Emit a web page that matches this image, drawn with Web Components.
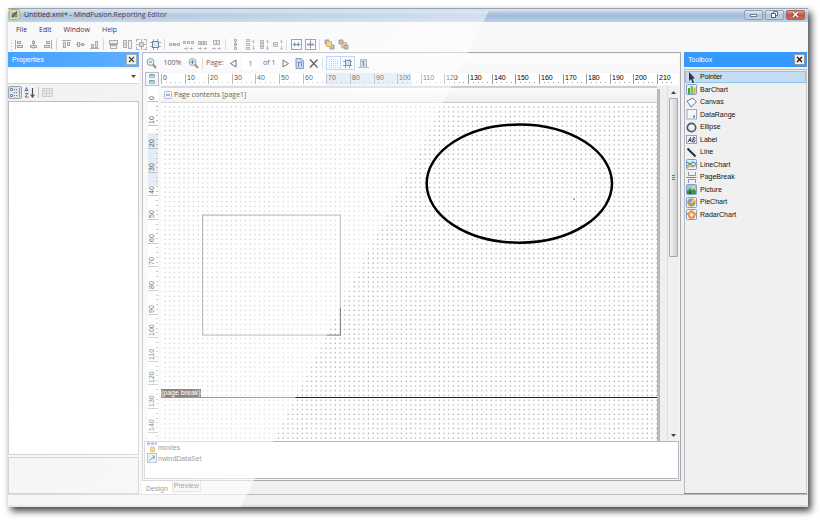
<!DOCTYPE html>
<html lang="en">
<head>
<meta charset="utf-8">
<title>MindFusion.Reporting Editor</title>
<style>
  html { background: #fff; }
  body { margin: 0; padding: 8px 12px 13px 8px; box-sizing: border-box; min-height: 100vh; display: flex;
    font: 7px/10px "Liberation Sans", Arial, sans-serif; color: #111;
    --ui: "Open Sans", "Noto Sans", sans-serif; }
</style>
</head>
<body>
<app-window></app-window>
<script>
const svg = (body, w = 11, h = 11) => `<svg viewBox="0 0 ${w} ${h}" width="${w}" height="${h}" fill="none">${body}</svg>`;
const G = '#9c9c9f';
const box = (x, y, w, h, f = '#ddd') => `<rect x="${x + .5}" y="${y + .5}" width="${w - 1}" height="${h - 1}" fill="${f}" stroke="${G}"/>`;
const ln = (d, c = G, w = 1) => `<path d="${d}" stroke="${c}" stroke-width="${w}"/>`;
const arrowsH = ln('M1 9.500h3M6.500 9.500h3') + `<path d="M3 8l2 1.500-2 1.500zM8 8l2 1.500-2 1.500z" fill="${G}"/>`;
const arrowsV = ln('M9.500 1v3.500M9.500 6.500v4') + `<path d="M8 3l1.500-2 1.500 2zM8 9l1.500 2 1.500-2z" fill="${G}"/>`;
const lens = s => `<circle cx="4.500" cy="4" r="3.500" fill="#d8e8f4" stroke="#6f8796"/><path d="M7 6.500l3 3.500" stroke="#8d6b48" stroke-width="2"/>` + ln(s, '#34618c');
const frame = (f = '#e4f0fb') => `<rect x=".5" y=".5" width="10" height="10" rx="1" fill="${f}" stroke="#7f9fc9"/>`;
const ICONS = {
  alignLeft: ln('M1.500 1v9') + box(3, 2, 4, 3) + box(3, 6, 6, 3),
  alignCenter: ln('M5.500 1v9') + box(4, 2, 3, 3) + box(2, 6, 7, 3),
  alignRight: ln('M9.500 1v9') + box(4, 2, 4, 3) + box(2, 6, 6, 3),
  alignTop: ln('M1 1.500h9') + box(2, 3, 3, 6) + box(6, 3, 3, 4),
  alignMiddle: ln('M1 5.500h9') + box(2, 3, 3, 5) + box(6, 4, 3, 3),
  alignBottom: ln('M1 9.500h9') + box(2, 5, 3, 4) + box(6, 2, 3, 7),
  sameWidth: box(1, 1, 9, 4, '#eee') + box(2, 6, 7, 4, '#eee') + ln('M1 5.500h9'),
  sameHeight: box(1, 1, 4, 8, '#eee') + box(6, 1, 4, 9, '#eee') + ln('M3 3v4'),
  sameSize: box(3, 3, 5, 5, '#ccc') + `<path d="M.5 3V.5h3M7.500 .5h3v3M10.500 7.500v3h-3M3.500 10.500h-3v-3" stroke="${G}"/>` + ln('M5.500 0v3M5.500 8v3M0 5.500h3M8 5.500h3'),
  sizeGrid: `<path d="M3.500 0v11M7.500 0v11M0 3.500h11M0 7.500h11" stroke="#8a97a8"/><rect x="2.500" y="2.500" width="6" height="6" fill="#d6e2ee" stroke="#4f6478"/>`,
  hEqual: box(0, 4, 3, 3) + box(4, 4, 3, 3) + box(8, 4, 3, 3) + ln('M3 5.500h5'),
  hMore: box(0, 2, 3, 3) + box(4, 2, 3, 3) + box(8, 2, 3, 3) + arrowsH,
  hLess: box(1, 2, 3, 4) + box(4, 2, 3, 4) + box(7, 2, 3, 4) + arrowsH,
  hNone: box(2, 1, 4, 5) + box(5, 1, 4, 5) + arrowsH,
  vEqual: box(4, 0, 3, 3) + box(4, 4, 3, 3) + box(4, 8, 3, 3) + ln('M5.500 2v7'),
  vMore: box(2, 0, 4, 3) + box(2, 4, 4, 3) + box(2, 8, 4, 3) + arrowsV,
  vLess: box(2, 1, 4, 3) + box(2, 4, 4, 3) + box(2, 7, 4, 3) + arrowsV,
  vNone: box(1, 3, 5, 3) + box(1, 5, 5, 3) + arrowsV,
  centerH: `<rect x=".5" y=".5" width="10" height="10" fill="#f6f9fc" stroke="#65758b"/>` + ln('M1.500 5.500h8', '#3e5570') + `<path d="M3 3l2.500 2.500L3 8zM8 3v5L5.500 5.500z" fill="#506680"/>`,
  centerV: `<rect x=".5" y=".5" width="10" height="10" fill="#f6f9fc" stroke="#65758b"/>` + ln('M5.500 1.500v8', '#3e5570') + `<path d="M2 4.500h7v2H2z" fill="#506680"/>`,
  toFront: `<path d="M1 1h4v4H1zM6 6h4v4H6z" fill="#999" stroke="#666"/><path d="M2.500 2.500h5v5h-5z" fill="#f5bb42" stroke="#b9862c"/>`,
  toBack: `<path d="M3.500 3.500h5v5h-5z" fill="#f5bb42" stroke="#b9862c"/><path d="M1 1h4v4H1zM6 6h4v4H6z" fill="#999" stroke="#666"/>`,
  zoomOut: lens('M3 4h3'), zoomIn: lens('M2.500 4h4M4.500 2v4'),
  prev: `<path d="M8 2v7L2.500 5.500z" stroke="#333"/>`, next: `<path d="M3 2v7l5.500-3.500z" stroke="#333"/>`,
  setup: `<path d="M2 .5h5.500l2 2v8H2z" fill="#a9c8f2" stroke="#41699f"/><path d="M3.500 4.500h4v4M4.500 5v4" stroke="#2c5893"/><path d="M7 .5v2.500h2.500" stroke="#557eb5" fill="#fff"/>`,
  remove: ln('M2 1.500l7.500 8M9.500 1.500l-7.500 8', '#111', 1.5),
  dots: [1, 3, 5, 7, 9].map(y => [1, 3, 5, 7, 9].map(x => `<rect x="${x}" y="${y}" width="1" height="1" fill="#b4b4b8"/>`).join('')).join(''),
  snap: `<path d="M3.500 1v9M7.500 1v9M1 3.500h9M1 7.500h9" stroke="#4d5c70"/><rect x="3.500" y="2.500" width="5" height="5" fill="#afc9f0" stroke="#2c4a70"/>`,
  ruler: `<path d="M2.500 1.500h6v8h-6z" fill="#b5c2da" stroke="#74849c"/><path d="M5.500 3v5M4 3.500h2" stroke="#2b3c55"/><path d="M0 9.500h11" stroke="#889"/>`,
  categorized: `<path d="M.5 1.500h2v2h-2zM.5 7.500h2v2h-2z" fill="#fff" stroke="#5c7395"/><path d="M4 2.500h4M4 5.500h4M4 8.500h4" stroke="#566f94" stroke-dasharray="1 1"/><path d="M9.500 1v9" stroke="#7c8fb0"/>`,
  sorted: `<path d="M1 4.500L2.500.5 4 4.500M1.500 3.500h2" stroke="#3358b0"/><path d="M1 6.500h3L1 10h3.500" stroke="#a33"/><path d="M8.500 1v8M6.500 7.500l2 2.500 2-2.500" stroke="#333" stroke-width="1.200"/>`,
  pages: `<path d="M.5 1.500h10v8H.5z" fill="#e4e4e4" stroke="#c4c4c4"/><path d="M1 3.500h9M1 6.500h9M4.500 3v6M7.500 3v6" stroke="#ccc"/>`,
  pointer: `<path d="M3 0v9l2-2 1.500 4 1.500-.6L6.500 6.500H9z" fill="#333"/>`,
  bar: frame() + `<path d="M2 4h2v6H2z" fill="#36a85c"/><path d="M4.500 2h2.500v8H4.500z" fill="#7fc13f"/><path d="M7.500 3.500h2V10h-2z" fill="#dcae2e"/>`,
  canvas: `<path d="M1 4L7 1l3.500 4L5 10z" fill="#f4f8fd" stroke="#6179a6"/>`,
  range: `<rect x="1" y=".5" width="9.500" height="9.500" fill="#f4f6fc" stroke="#9ba8cb"/><path d="M7 6.500h2v2H7z" fill="#6279a8"/>`,
  ellipse: `<circle cx="5.500" cy="5.500" r="4.200" stroke="#4d5966" stroke-width="1.700"/>`,
  label: `<rect x=".5" y="1.500" width="10" height="8" fill="#f1f3f7" stroke="#9ca5b5"/><path d="M2 8l2.500-4.500L5 8M3 6.500h2M6.500 8l.7-4.500h1.500l.3 1-1 1h-1M8 5.500l1 1-.7 1.500H6.500" stroke="#3d4c66"/>`,
  line: ln('M1.500 1.500l8 8', '#1d2c45', 2),
  lineChart: frame() + ln('M1 3l3 2 3-2 3 2', '#3d8fd4', 1.3) + ln('M1 7l3-2 3 2 3-1', '#5fb045', 1.3) + ln('M1 9l3-2 3 1 3-2', '#df8d43', 1),
  pageBreak: `<path d="M2.500 0v3.500h7V0M2.500 11V7.500h7V11" stroke="#8996aa" fill="#eef2f8"/>` + ln('M.5 5.500h10', '#76859c'),
  picture: frame('#9dc7e6') + `<path d="M1 7l3-3 2 2 2-1 2 2v3H1z" fill="#3d9746"/><circle cx="7.500" cy="3" r="1.500" fill="#f4d34b"/><path d="M3 7h2v3H3z" fill="#245b35"/>`,
  pie: frame() + `<circle cx="5.500" cy="5.500" r="4" fill="#e9954a"/><path d="M5.500 5.500V1.500a4 4 0 0 0-4 4z" fill="#5ea8dd"/><path d="M5.500 5.500l3.500 1.500A4 4 0 0 1 3 8.500z" fill="#7cbb51"/><path d="M5 6L9 2" stroke="#fff"/>`,
  radar: frame('#fbf3ea') + `<path d="M5.500 1.500l4 3-1.500 4.500H3.500L1.500 4.500z" fill="#f1a768" stroke="#cf7c3e"/><path d="M5.500 4l2 1.500-1 2H4.500l-1-2z" fill="#fbe1c8"/>`,
  source: `<path d="M0 1.500h10" stroke="#2b5dd0" stroke-width="2" stroke-dasharray="3 1"/><path d="M.5 4h9" stroke="#87a8e8" stroke-dasharray="2 1"/><path d="M3.500 5.500h4v4.500h-4z" fill="#edb010" stroke="#c9900c"/>`,
  dataSet: `<rect x=".5" y=".5" width="9" height="9" fill="#d3ddf0" stroke="#7289b4"/><path d="M2 7.500c2 0 2-3 5-3.500M5.500 2.500l2.500 1.500-2 2" stroke="#15336f"/>`,
  logo: `<rect x=".5" y=".5" width="10" height="10" rx="2" fill="#e9e47e" stroke="#a9b45c"/><path d="M2.500 3.500h6v5h-6z" fill="#6a8fb4"/><path d="M3 8l5-5.500" stroke="#3d5166" stroke-width="1.200"/>`,
  close: ln('M3 3l5 5M8 3l-5 5', '#111', 1.200),
};

/* Registers an element whose shadow root is cloned from a template. */
function define(name, html, setup) {
  const t = document.createElement('template');
  t.innerHTML = `<style>*{box-sizing:border-box}button,input,select{font:inherit;color:inherit;margin:0;padding:0;border:0;background:none}button{display:flex;align-items:center;justify-content:center}</style>` + html;
  customElements.define(name, class extends HTMLElement {
    connectedCallback() {
      if (this.shadowRoot) return;
      const root = this.attachShadow({ mode: 'open' });
      root.append(t.content.cloneNode(true));
      if (setup) setup(root, this);
    }
  });
}

define('ui-icon', `<style>:host{display:block;flex:none;width:11px;height:11px}span,svg{display:block}</style><span></span>`,
  (r, el) => { r.querySelector('span').innerHTML = svg(ICONS[el.getAttribute('name')]); });

define('title-bar', `<style>
  :host{display:flex;align-items:center;height:14px;padding:0 3px 2px 1px;gap:4px;border-top:1px solid #9aa3ad;background:linear-gradient(#dbe7f3,#a2bcd9 45%,#a9c3df 70%,#bcd1e7);color:#1d1030}
  h1{flex:1;margin:0;font:7px/10px var(--ui);white-space:nowrap}
  .w{display:flex;gap:2px} .w button{width:19px;height:10px;border:1px solid #8d9fb5;border-radius:2px;background:linear-gradient(#e3ebf4,#b4c5d8 50%,#c2d1e1)}
  .w .x{background:linear-gradient(#e1a094,#c1503f 50%,#cc6d57);border-color:#a0625a}
  .w svg{display:block}
  </style><ui-icon name="logo"></ui-icon><h1>Untitled.xml* - MindFusion.Reporting Editor</h1>
  <div class="w"><button aria-label="Minimize">${svg('<rect x="1.500" y="4.500" width="6" height="2" fill="#fff" stroke="#778"/>', 9, 9)}</button>
  <button aria-label="Restore">${svg('<path d="M3.500 1.500h4v4h-4z" stroke="#667" fill="#fff"/><path d="M1.500 3.500h4v4h-4z" stroke="#556" fill="#fff"/>', 9, 9)}</button>
  <button class="x" aria-label="Close">${svg('<path d="M2 2l5 5M7 2l-5 5" stroke="#844" stroke-width="3"/><path d="M2 2l5 5M7 2l-5 5" stroke="#fff" stroke-width="1.500"/>', 9, 9)}</button></div>`);

define('menu-bar', `<style>:host{display:flex;height:15px;padding:0 8px;gap:12px;align-items:center;background:#f8f8f9;font:7px/10px var(--ui);color:#2c0c2f}</style>
  <button>File</button><button>Edit</button><button>Window</button><button>Help</button>`);

define('tool-strip', `<style>:host{display:flex;height:15px;padding-left:3px;gap:3px;align-items:center;background:#f8f8f9}
  i{width:2px;height:11px;border-left:1px solid #ccc} .grip{width:1px;height:10px;margin-right:-1px;border:0;background:repeating-linear-gradient(#bbb 0 1px,transparent 1px 3px)}
  </style><i class="grip"></i>`, r => {
  const names = 'alignLeft alignCenter alignRight | alignTop alignMiddle alignBottom | sameWidth sameHeight sameSize sizeGrid | hEqual hMore hLess hNone | vEqual vMore vLess vNone | centerH centerV | toFront toBack';
  r.lastElementChild.insertAdjacentHTML('afterend', names.split(' ').map(n => n === '|' ? '<i></i>' : `<button aria-label="${n}"><ui-icon name="${n}"></ui-icon></button>`).join(''));
});

define('dock-panel', `<style>:host{display:flex;flex-direction:column;min-width:0;min-height:0}
  header{display:flex;align-items:center;justify-content:space-between;height:15px;padding:0 2px 0 4px;background:#3399ff;color:#fff;flex:none}
  h2{margin:0;font:7px/10px "Liberation Sans",sans-serif}
  button{width:11px;height:11px;background:#eee;border:1px solid #999}button ui-icon{margin:-1px}
  </style><header><h2></h2><button aria-label="Close panel"><ui-icon name="close"></ui-icon></button></header><slot></slot>`,
  (r, el) => { r.querySelector('h2').textContent = el.getAttribute('heading'); });

define('property-grid', `<style>:host{display:flex;flex-direction:column;flex:1;min-height:0;padding-top:2px;background:#f0f0f0}
  .pick{display:flex;position:relative;height:15px;background:#fff;border-bottom:1px solid #ccc}
  select{appearance:none;flex:1;outline:0}.pick svg{position:absolute;right:2px;top:5px}
  .bar{display:flex;align-items:center;gap:2px;height:17px} .bar .on{border:1px solid #8b98a8;background:#dbe0e6;height:13px;width:14px;border-radius:2px}
  i{height:11px;border-left:1px solid #bbb;margin:0 1px}
  .rows{flex:1;background:#fff;border:1px solid #b4b4b8}.help{height:37px;margin-top:2px;border:1px solid #b4b4b8;background:#efefef}
  </style><div class="pick"><select aria-label="Object"></select>${svg('<path d="M1 1h5L3.500 4z" fill="#222"/>', 7, 5)}</div>
  <div class="bar"><button class="on" aria-label="Categorized"><ui-icon name="categorized"></ui-icon></button><button aria-label="Alphabetical"><ui-icon name="sorted"></ui-icon></button><i></i><button aria-label="Property pages"><ui-icon name="pages"></ui-icon></button></div>
  <div class="rows"></div><div class="help"></div>`);

define('tool-box', `<style>:host{flex:1;display:grid;grid-auto-rows:12px 13px;align-content:start;padding:1px 0;margin-top:2px;border:1px solid #b7b7bb;border-right-color:#ccc;border-bottom-color:#888;background:#f0f0f0}
  button{justify-content:flex-start;gap:3px;border:1px solid transparent}
  .on{background:#c2dcf3;border-color:#8ec2ef}</style>`, r => {
  const items = { Pointer: 'pointer', BarChart: 'bar', Canvas: 'canvas', DataRange: 'range', Ellipse: 'ellipse', Label: 'label', Line: 'line', LineChart: 'lineChart', PageBreak: 'pageBreak', Picture: 'picture', PieChart: 'pie', RadarChart: 'radar' };
  const t = document.createElement('template');
  t.innerHTML = Object.entries(items).map(([n, i], k) => `<button class="${k ? '' : 'on'}"><ui-icon name="${i}"></ui-icon>${n}</button>`).join('');
  r.append(t.content);
});

define('view-bar', `<style>:host{display:flex;align-items:center;height:18px;padding-left:3px;background:linear-gradient(#fdfdfd,#f7f7f8);font:7px/10px var(--ui);color:#2c0c2f}
  output,label,span{white-space:nowrap} output{width:31px;text-align:center} i{height:11px;border-left:1px solid #ccc;margin:0 3px}
  label{width:22px} input{width:17px;height:13px;background:#fff;text-align:center;margin:0 4px 0 3px;outline:0}
  .n{margin-right:5px;width:12px}.s{margin-right:3px}
  .on{width:15px;height:14px;border:1px solid #90c0f0;background:#f5faff;margin-right:-1px}.last{margin-left:4px}
  </style><button aria-label="Zoom out"><ui-icon name="zoomOut"></ui-icon></button><output>100%</output><button aria-label="Zoom in"><ui-icon name="zoomIn"></ui-icon></button><i></i>
  <label for="p">Page:</label><button aria-label="Previous page"><ui-icon name="prev"></ui-icon></button><input id="p" value="1"><span class="n">of 1</span>
  <button class="s" aria-label="Next page"><ui-icon name="next"></ui-icon></button><button class="s" aria-label="Page setup"><ui-icon name="setup"></ui-icon></button><button aria-label="Delete"><ui-icon name="remove"></ui-icon></button><i></i>
  <button class="on" aria-label="Show grid"><ui-icon name="dots"></ui-icon></button><button class="on" aria-label="Snap to grid"><ui-icon name="snap"></ui-icon></button><button class="last" aria-label="Rulers"><ui-icon name="ruler"></ui-icon></button>`);

/* Millimetre ruler; one millimetre at 100% zoom, in screen pixels. */
const MM = 2.362;
define('mm-ruler', `<style>:host{display:block;min-width:0;min-height:0;overflow:hidden;position:relative}
  svg{position:absolute;inset:0;width:100%;height:100%}text{font:7px "Liberation Sans",sans-serif;fill:#000}</style><svg></svg>`, (r, el) => {
  const vertical = el.hasAttribute('vertical');
  let s = vertical ? '<rect x="5" width="10" height="100%" fill="#fff"/><rect x="5" y="47" width="10" height="53" fill="#d8e3f2"/>'
                   : '<rect y="1" width="100%" height="12" fill="#fff"/><rect x="166" y="1" width="84" height="12" fill="#d8e3f2"/>';
  for (let mm = 0; mm <= (vertical ? 142 : 216); mm += 2) {
    const major = mm % 10 === 0;
    if (vertical) {
      const y = Math.round(15 + mm * MM);
      s += `<rect x="${major ? 5 : 13}" y="${y}" width="${major ? 10 : 2}" height="1" fill="#aaa"/>`;
      if (major) s += `<text transform="translate(11 ${y - 1}) rotate(-90)">${mm}</text>`;
    } else {
      const x = Math.round(mm * MM);
      s += `<rect x="${x}" y="${major ? 2 : 10}" width="1" height="${major ? 10 : 1}" fill="#999"/>`;
      if (major) s += `<text x="${x + 2}" y="8">${mm}</text>`;
    }
  }
  r.querySelector('svg').innerHTML = s;
});

define('report-page', `<style>:host{display:flex;flex-direction:column;min-width:0;min-height:0;position:relative;background:#fff;border-top:2px solid #cdcdd0;box-shadow:3px 3px 0 #b9b9bb,-1px 0 0 #ccc}
  header{display:flex;align-items:center;gap:1px;height:15px;padding:0 0 1px 2px;background:linear-gradient(#fcfcfc,#efeff0);border-bottom:1px solid #c8c8ca;font:7px/10px var(--ui);flex:none}
  svg.area{flex:1;min-height:0;width:100%;display:block}
  .break{position:absolute;left:0;right:0;top:301px;border-bottom:1px solid #222;height:9px;display:flex}
  .break span{background:#111;color:#fff;font:7px/8px "Liberation Sans",sans-serif;height:8px;white-space:nowrap}
  </style><header>${svg('<rect x="1.500" y="1.500" width="7" height="7" rx="1" fill="#edf2fa" stroke="#8a9ed2"/><path d="M3 5h4" stroke="#335" />', 10, 10)}Page contents [page1]</header>
  <svg class="area" viewBox="0 0 210 143" preserveAspectRatio="xMinYMin slice"><defs><pattern id="g" width="2" height="2" patternUnits="userSpaceOnUse"><rect x="1.500" y="1.500" width=".42" height=".42" fill="#6c6c6c"/></pattern></defs>
  <rect width="210" height="160" fill="url(#g)"/><rect x="17.600" y="47.400" width="58.300" height="50.800" stroke="#777" stroke-width=".42" fill="none"/>
  <ellipse cx="151.600" cy="34.100" rx="39.200" ry="25" stroke="#000" stroke-width="1.050" fill="none"/><rect x="174.500" y="40.200" width=".5" height=".9" fill="#2a4"/></svg>
  <div class="break"><span>(page break)</span></div>`);

define('scroll-track', `<style>:host{display:grid;grid-template-rows:12px 46fr 50fr 12px;justify-items:center;align-items:center;background:#f0f0f1;border-left:1px solid #ddd}
  b{width:9px;height:100%;border:1px solid #aaa;border-radius:1px;background:linear-gradient(90deg,#f4f4f4,#cfcfd1);display:grid;place-items:center}svg{display:block}</style>
  ${svg('<path d="M1 4l2.500-3L6 4z" fill="#444"/>', 7, 5)}<b>${svg('<path d="M1 .5h3M1 2.500h3M1 4.500h3" stroke="#777"/>', 5, 5)}</b><s></s>${svg('<path d="M1 1h5L3.500 4z" fill="#444"/>', 7, 5)}`);

define('source-list', `<style>:host{display:block;border:1px solid #b5b5ba;background:#fff}ul{list-style:none;margin:0;padding:0 2px}li{display:flex;align-items:center;height:11px}</style>
  <ul><li><ui-icon name="source"></ui-icon>movies</li><li><ui-icon name="dataSet"></ui-icon>nwindDataSet</li></ul>`);

define('page-designer', `<style>:host{display:flex;flex-direction:column;min-width:0;min-height:0}
  .body{flex:1;min-height:0;display:flex;flex-direction:column;border:1px solid #a8a8b2;padding:1px 1px 1px 0;background:#f5f5f6}
  .work{flex:1;min-height:0;display:grid;grid-template:14px 1fr / 18px 1fr 12px;overflow:hidden}
  .unit{width:14px;margin-left:2px;border:1px solid #aaa;background:#f2f2f2;font:7px/6px "Liberation Sans",sans-serif;text-align:center}
  mm-ruler:not([vertical]){grid-column:2/4} .paper{display:grid;min-height:0;min-width:0;padding-right:10px;background:#efeff0;overflow:hidden}
  source-list{height:38px;margin-left:1px}
  nav{display:flex;height:13px;align-items:stretch}
  nav button{padding:0 1px;border:1px solid #c5c5c8;border-top:0;background:#ececed;margin-bottom:2px}
  nav .on{background:#fff;margin:0;padding:3px 3px 0;border-color:#fff}
  </style><div class="body"><view-bar></view-bar><div class="work"><div class="unit">m<br>m</div><mm-ruler></mm-ruler>
  <mm-ruler vertical></mm-ruler><div class="paper"><report-page></report-page></div><scroll-track></scroll-track></div><source-list></source-list></div>
  <nav role="tablist"><button class="on" role="tab" aria-selected="true">Design</button><button role="tab">Preview</button></nav>`);

define('app-window', `<style>:host{flex:1;min-width:0;position:relative;display:flex;flex-direction:column;background:#f0f0f1;box-shadow:3px 4px 7px rgba(0,0,0,.75)}
  main{flex:1;min-height:0;display:grid;grid-template:minmax(0,1fr) / 131px minmax(0,1fr) 123px;column-gap:3px;padding-right:1px}
  footer{height:13px;border-top:1px solid #bbb;border-bottom:2px solid #d8dcde;background:#f1eeee;flex:none}
  main>*{min-height:0}
  .glare{position:absolute;inset:3px 0 0 0;pointer-events:none;clip-path:polygon(0 0,60.1% 0,29.1% 100%,0 100%);
    background:linear-gradient(130deg,rgba(255,255,255,.05),rgba(255,255,255,.62) 470px)}
  </style><title-bar></title-bar><menu-bar></menu-bar><tool-strip></tool-strip>
  <main><dock-panel heading="Properties"><property-grid></property-grid></dock-panel><page-designer></page-designer>
  <dock-panel heading="Toolbox"><tool-box></tool-box></dock-panel></main><footer></footer><div class="glare"></div>`);
</script>
</body>
</html>
